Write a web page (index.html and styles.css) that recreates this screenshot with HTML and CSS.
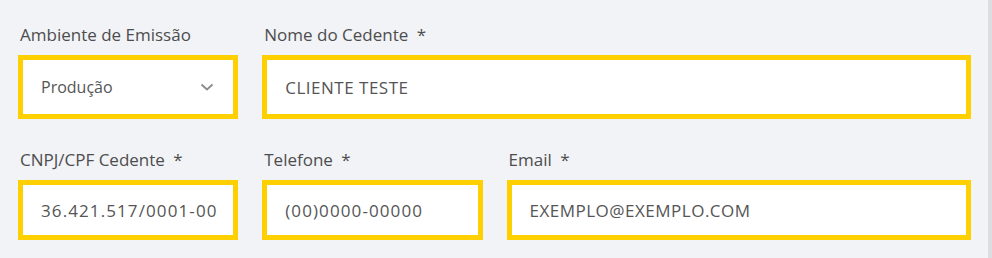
FILE: index.html
```html
<!DOCTYPE html>
<html lang="pt-BR">
<head>
    <meta charset="UTF-8">
    <meta name="viewport" content="width=device-width, initial-scale=1.0">
    <title>Cedente</title>
    <link rel="stylesheet" href="styles.css">
</head>
<body>
    <div class="page">
        <form class="form-grid">
            <div class="field span-3 first-row">
                <label for="ambiente">Ambiente de Emissão</label>
                <div class="select-box">
                    <select id="ambiente">
                        <option>Produção</option>
                        <option>Homologação</option>
                    </select>
                    <svg class="chevron" width="14" height="8" viewBox="0 0 14 8">
                        <path d="M1.5 1.5 L7 6.5 L12.5 1.5" fill="none" stroke="#8a8a8a" stroke-width="1.8"/>
                    </svg>
                </div>
            </div>
            <div class="field span-9 first-row">
                <label for="nome">Nome do Cedente <span class="req">*</span></label>
                <input type="text" id="nome" class="caps" value="CLIENTE TESTE">
            </div>

            <div class="field span-3">
                <label for="cnpj">CNPJ/CPF Cedente <span class="req">*</span></label>
                <input type="text" id="cnpj" class="digits" value="36.421.517/0001-00">
            </div>
            <div class="field span-3">
                <label for="telefone">Telefone <span class="req">*</span></label>
                <input type="text" id="telefone" class="digits" value="(00)0000-00000">
            </div>
            <div class="field span-6">
                <label for="email">Email <span class="req">*</span></label>
                <input type="text" id="email" class="caps" value="EXEMPLO@EXEMPLO.COM">
            </div>
        </form>
    </div>
</body>
</html>
```

FILE: styles.css
```css
html, body {
    margin: 0;
    padding: 0;
}
body {
    font-family: "Open Sans", Lato, sans-serif;
    background-color: #f2f3f7;
    color: #4d4d4d;
    width: 992px;
    height: 258px;
    overflow: hidden;
}
.page {
    width: 992px;
    height: 258px;
    box-sizing: border-box;
    padding: 25px 17px 0 18px;
    border-right: 4px solid #dcdde1;
}
.form-grid {
    display: grid;
    grid-template-columns: repeat(12, 1fr);
    column-gap: 24px;
    row-gap: 31px;
}
.span-3 { grid-column: span 3; }
.span-6 { grid-column: span 6; }
.span-9 { grid-column: span 9; }
.field label {
    display: block;
    font-size: 17px;
    line-height: 20px;
    margin-bottom: 10px;
    padding-left: 2px;
    color: #4d4d4d;
}
.req {
    margin-left: 4px;
}
input[type="text"], select {
    display: block;
    width: 100%;
    height: 60px;
    box-sizing: border-box;
    border: 5px solid #ffd000;
    background-color: white;
    padding: 0 4px 0 18px;
    font-family: inherit;
    font-size: 17px;
    color: #555;
    outline: none;
    border-radius: 0;
}
select {
    font-size: 16px;
}
input.caps {
    letter-spacing: 0.5px;
}
input.digits {
    letter-spacing: 1.1px;
}
.first-row input[type="text"], .first-row select {
    height: 64px;
}
.select-box {
    position: relative;
}
select {
    appearance: none;
    -webkit-appearance: none;
}
.chevron {
    position: absolute;
    right: 24px;
    top: 28px;
    pointer-events: none;
}
```
